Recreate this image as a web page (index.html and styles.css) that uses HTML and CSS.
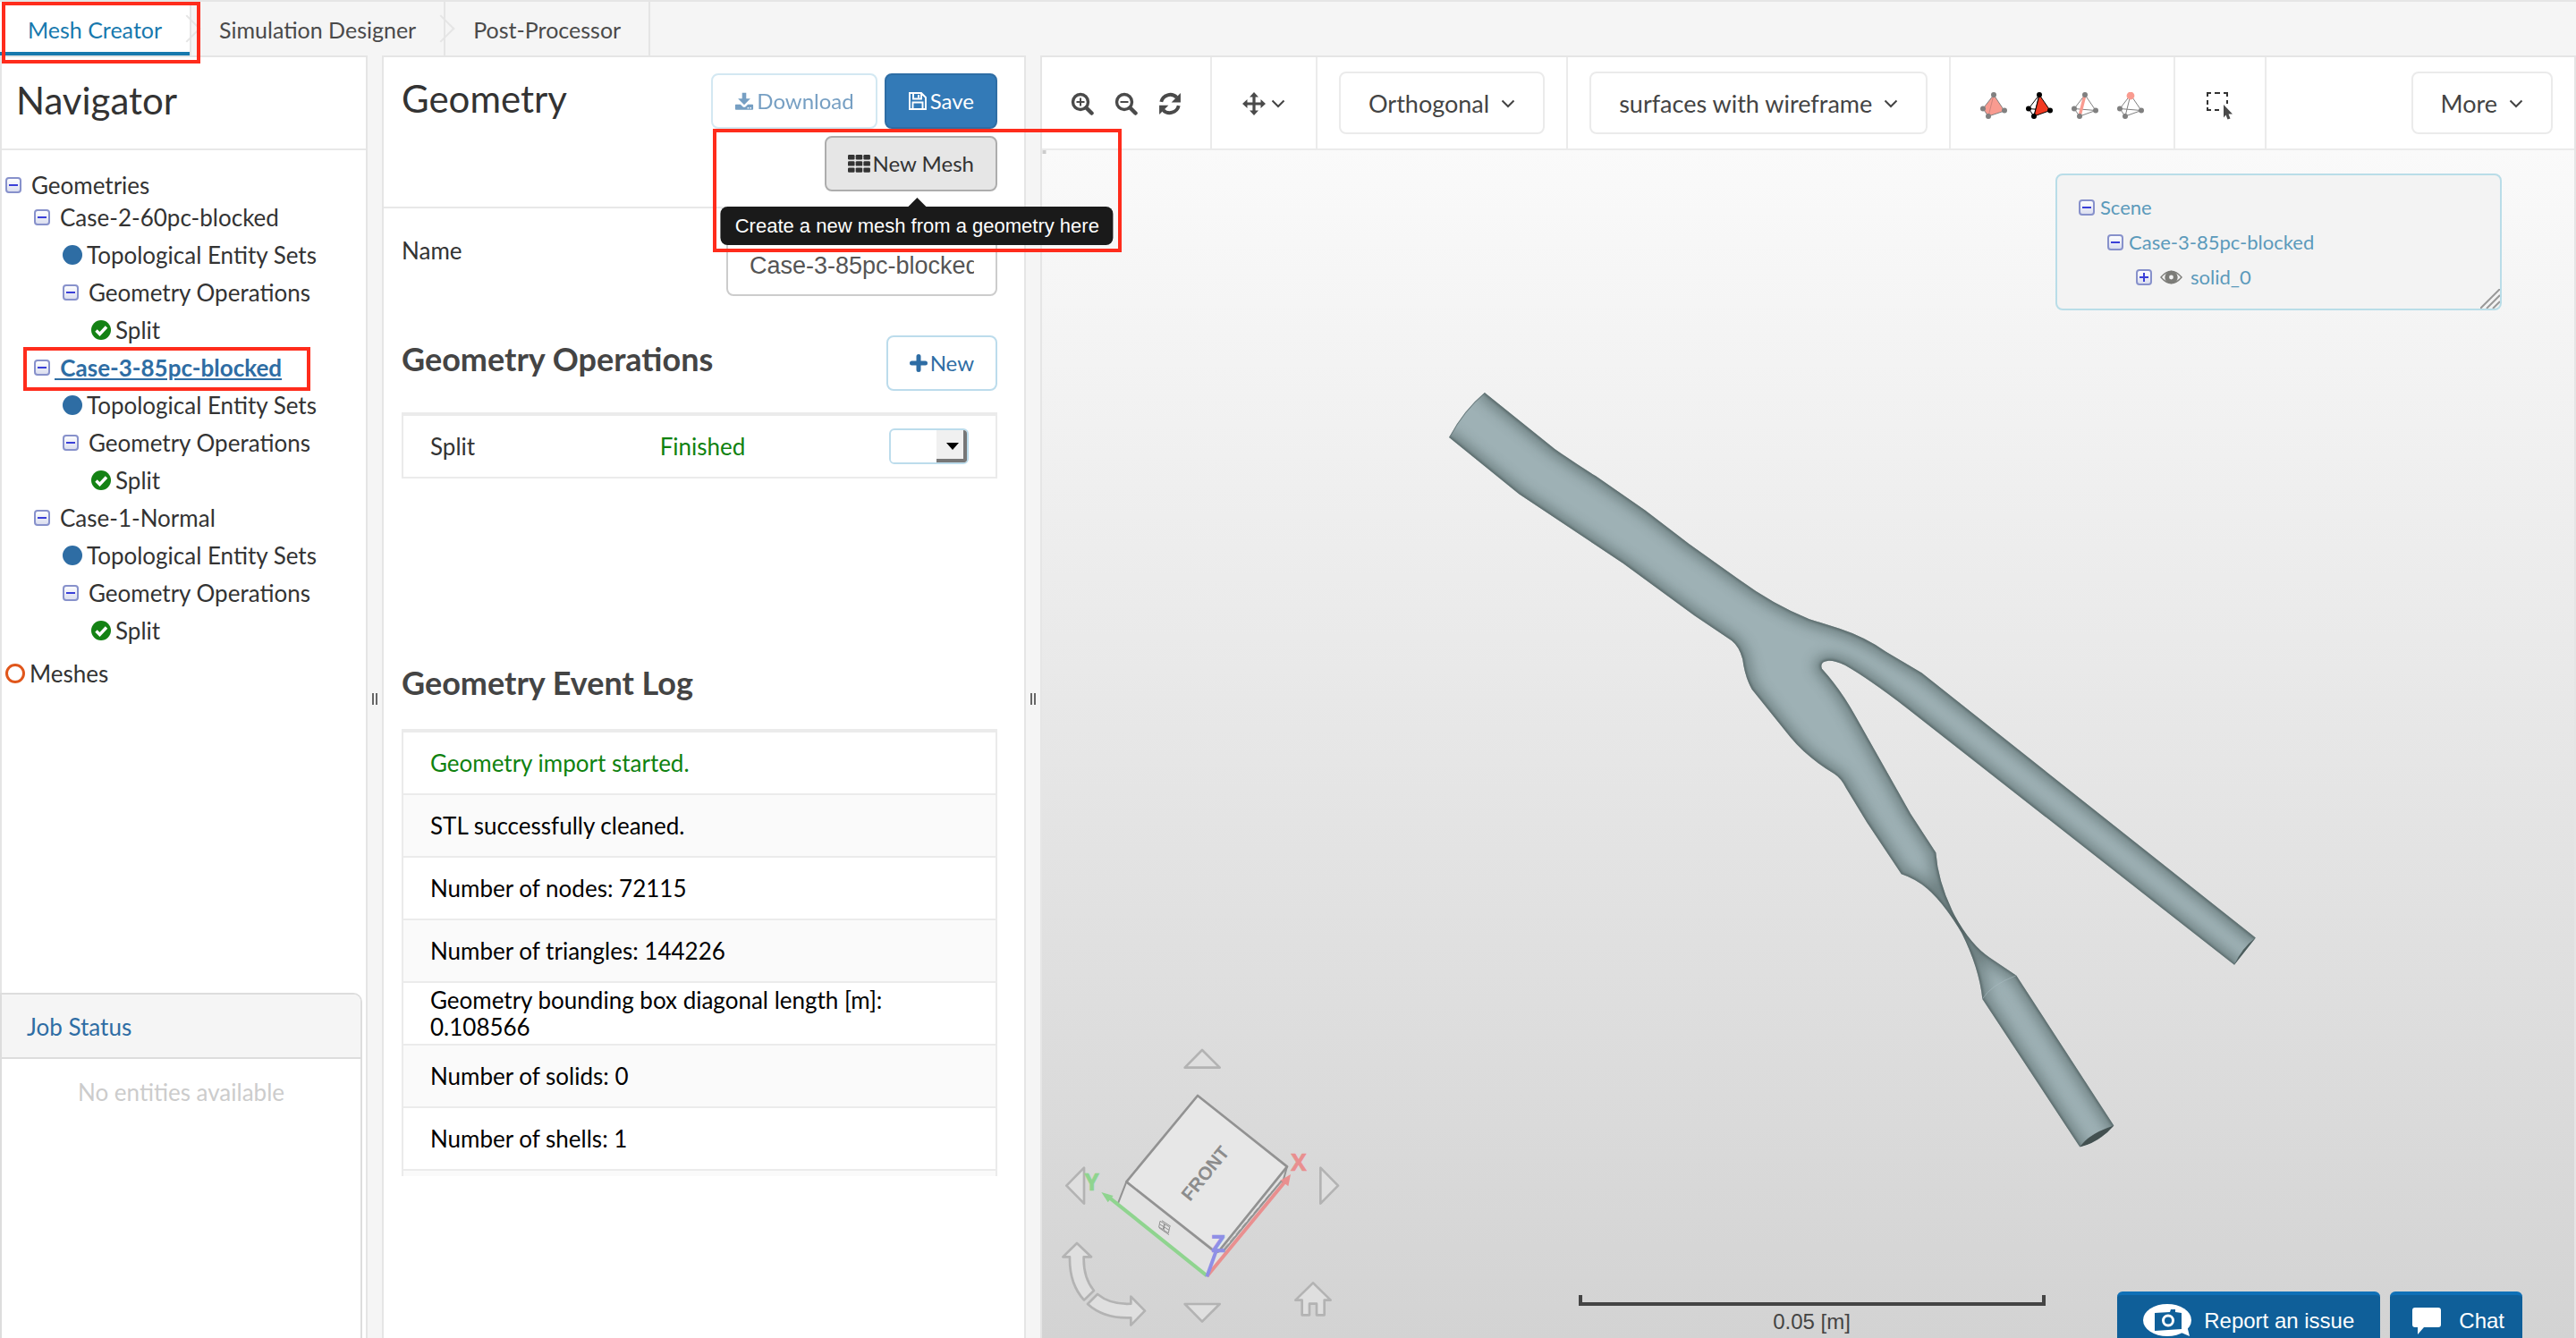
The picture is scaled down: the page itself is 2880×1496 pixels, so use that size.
FILE: index.html
```html
<!DOCTYPE html>
<html lang="en">
<head>
<meta charset="utf-8">
<title>Mesh Creator</title>
<link rel="stylesheet" href="styles.css">
</head>
<body>
<svg class="sprite" aria-hidden="true">
  <defs>
    <linearGradient id="box-fill" x1="0" y1="0" x2="0" y2="1"><stop offset="0" stop-color="#fff"/><stop offset="1" stop-color="#d9dcee"/></linearGradient>
  </defs>
  <symbol id="collapse" viewBox="0 0 18 18"><rect x="1" y="1" width="16" height="16" rx="3" fill="url(#box-fill)" stroke="#8791cb" stroke-width="2"/><path d="M4 9h10" stroke="#3a3fd8" stroke-width="2"/></symbol>
  <symbol id="expand" viewBox="0 0 18 18"><rect x="1" y="1" width="16" height="16" rx="3" fill="url(#box-fill)" stroke="#8791cb" stroke-width="2"/><path d="M4 9h10M9 4v10" stroke="#3a3fd8" stroke-width="2"/></symbol>
  <symbol id="dot" viewBox="0 0 22 22"><circle cx="11" cy="11" r="11" fill="#2e6da4"/></symbol>
  <symbol id="ring" viewBox="0 0 22 22"><circle cx="11" cy="11" r="9.5" fill="none" stroke="#e0561b" stroke-width="3"/></symbol>
  <symbol id="check" viewBox="0 0 22 22"><circle cx="11" cy="11" r="11" fill="#148214"/><path d="M5.500 11.500l4 4 7.500-8" fill="none" stroke="#fff" stroke-width="3.400"/></symbol>
  <symbol id="chevron" viewBox="0 0 16 10"><path d="M1.500 1.500L8 8l6.500-6.500" fill="none" stroke="#444" stroke-width="2"/></symbol>
  <symbol id="download" viewBox="0 0 24 24"><path fill="currentColor" d="M9.500 2h5v7h5L12 16.500 4.500 9h5zM2 16h5.500l3 3q1.500 1 3 0l3-3H22q1 0 1 1v4.500q0 1-1 1H2q-1 0-1-1V17q0-1 1-1z"/><path d="M16 20.500h1.600M19 20.500h1.600" stroke="#fff" stroke-width="1.600"/></symbol>
  <symbol id="floppy" viewBox="0 0 22 22"><path d="M2 2h13l5 5v13H2zM6 2v6.500h9V2M5.500 20v-7.500h11V20" fill="none" stroke="currentColor" stroke-width="1.900"/><path d="M11 4h2v3.500h-2z" fill="currentColor"/></symbol>
  <symbol id="grid" viewBox="0 0 25 20"><g fill="currentColor"><rect width="7.500" height="5.400" rx="1.200"/><rect x="8.700" width="7.500" height="5.400" rx="1.200"/><rect x="17.400" width="7.500" height="5.400" rx="1.200"/><rect y="7.200" width="7.500" height="5.400" rx="1.200"/><rect x="8.700" y="7.200" width="7.500" height="5.400" rx="1.200"/><rect x="17.400" y="7.200" width="7.500" height="5.400" rx="1.200"/><rect y="14.400" width="7.500" height="5.400" rx="1.200"/><rect x="8.700" y="14.400" width="7.500" height="5.400" rx="1.200"/><rect x="17.400" y="14.400" width="7.500" height="5.400" rx="1.200"/></g></symbol>
  <symbol id="plus" viewBox="0 0 20 20"><path d="M10 2.500v15M2.500 10h15" stroke="currentColor" stroke-width="5" stroke-linecap="round"/></symbol>
  <symbol id="zoom-in" viewBox="0 0 26 26"><g fill="none" stroke="#4a4a4a"><circle cx="11" cy="11" r="8.500" stroke-width="3.400"/><path d="M17.500 17.500l6 6" stroke-width="4.500" stroke-linecap="round"/><path d="M6.500 11h9M11 6.500v9" stroke-width="2"/></g></symbol>
  <symbol id="zoom-out" viewBox="0 0 26 26"><g fill="none" stroke="#4a4a4a"><circle cx="11" cy="11" r="8.500" stroke-width="3.400"/><path d="M17.500 17.500l6 6" stroke-width="4.500" stroke-linecap="round"/><path d="M6.500 11h9" stroke-width="2"/></g></symbol>
  <symbol id="refresh" viewBox="0 0 24 24"><path d="M3 10a9.500 9.500 0 0 1 16-4.500M21 14a9.500 9.500 0 0 1-16 4.500" fill="none" stroke="#4a4a4a" stroke-width="3.600"/><path d="M23 1v9.500h-9.500zM1 23v-9.500h9.500z" fill="#4a4a4a"/></symbol>
  <symbol id="move" viewBox="0 0 26 26"><path d="M13 4v18M4 13h18" stroke="#4a4a4a" stroke-width="3.200"/><path d="M13 0l5 5.500H8zM13 26l5-5.500H8zM0 13l5.500-5v10zM26 13l-5.500-5v10z" fill="#4a4a4a"/></symbol>
  <symbol id="marquee" viewBox="0 0 32 32"><path d="M2 6V2h4M10 2h6M20 2h4v4M24 10v4M2 10v5M2 18v3h4M10 21h5" fill="none" stroke="#333" stroke-width="2"/><path d="M20 15l10 10.500h-4.500l2 5-3 1-2-5-2.500 3z" fill="#4a4a4a"/></symbol>
  <symbol id="tetra-solid" viewBox="0 0 30 30"><path d="M15 3L3 18.500 9 27l18-6z" fill="#f99b90" stroke="#808080"/><path d="M15 3L9 27" stroke="#d0847c"/><g fill="#808080"><circle cx="15" cy="3" r="3"/><circle cx="3" cy="18.500" r="3"/><circle cx="9" cy="27" r="3"/><circle cx="27" cy="20.500" r="3"/></g></symbol>
  <symbol id="tetra-face" viewBox="0 0 30 30"><path d="M15 3L3 18.500 9 27 15 3M3 18.500l24 2" fill="none" stroke="#000"/><path d="M15 3L9 27l18-6.500z" fill="#f23a22" stroke="#000"/><g fill="#000"><circle cx="15" cy="3" r="3"/><circle cx="3" cy="18.500" r="3"/><circle cx="9" cy="27" r="3"/><circle cx="27" cy="20.500" r="3"/></g></symbol>
  <symbol id="tetra-edge" viewBox="0 0 30 30"><path d="M15 3L3 18.500 9 27l18-6.500zM3 18.500l24 2" fill="none" stroke="#808080"/><path d="M15 3L9 27" stroke="#f99b90" stroke-width="3.400"/><g fill="#808080"><circle cx="15" cy="3" r="3"/><circle cx="3" cy="18.500" r="3"/><circle cx="9" cy="27" r="3"/><circle cx="27" cy="20.500" r="3"/></g></symbol>
  <symbol id="tetra-vertex" viewBox="0 0 30 30"><path d="M15 3L3 18.500 9 27l18-6.500zM3 18.500l24 2M15 3L9 27" fill="none" stroke="#808080"/><circle cx="15" cy="4" r="4.400" fill="#f99b90"/><g fill="#808080"><circle cx="3" cy="18.500" r="3"/><circle cx="9" cy="27" r="3"/><circle cx="27" cy="20.500" r="3"/></g></symbol>
  <symbol id="eye" viewBox="0 0 26 16"><path d="M1 8q12-14 24 0-12 14-24 0z" fill="#f3f3f3" stroke="#7c7c78" stroke-width="1.400"/><circle cx="13" cy="8" r="5" fill="none" stroke="#7c7c78" stroke-width="5"/></symbol>
</svg>

<div class="app">
  <nav class="tabs">
    <a class="tab active marked" href="#mesh">Mesh Creator</a>
    <a class="tab" href="#simulation">Simulation Designer</a>
    <a class="tab" href="#post">Post-Processor</a>
  </nav>

  <main class="workspace">
    <section class="panel navigator">
      <header class="panel-head"><h1>Navigator</h1></header>
      <ul class="tree">
        <li class="root"><svg class="box"><use href="#collapse"/></svg><span>Geometries</span></li>
        <li class="level-1"><svg class="box"><use href="#collapse"/></svg><span>Case-2-60pc-blocked</span></li>
        <li class="level-2"><svg class="bullet"><use href="#dot"/></svg><span>Topological Entity Sets</span></li>
        <li class="level-2"><svg class="box"><use href="#collapse"/></svg><span>Geometry Operations</span></li>
        <li class="level-3"><svg class="bullet"><use href="#check"/></svg><span>Split</span></li>
        <li class="level-1 marked"><svg class="box"><use href="#collapse"/></svg><a class="current" href="#case-3">&nbsp;Case-3-85pc-blocked</a></li>
        <li class="level-2"><svg class="bullet"><use href="#dot"/></svg><span>Topological Entity Sets</span></li>
        <li class="level-2"><svg class="box"><use href="#collapse"/></svg><span>Geometry Operations</span></li>
        <li class="level-3"><svg class="bullet"><use href="#check"/></svg><span>Split</span></li>
        <li class="level-1"><svg class="box"><use href="#collapse"/></svg><span>Case-1-Normal</span></li>
        <li class="level-2"><svg class="bullet"><use href="#dot"/></svg><span>Topological Entity Sets</span></li>
        <li class="level-2"><svg class="box"><use href="#collapse"/></svg><span>Geometry Operations</span></li>
        <li class="level-3"><svg class="bullet"><use href="#check"/></svg><span>Split</span></li>
        <li class="meshes"><svg class="bullet"><use href="#ring"/></svg><span>Meshes</span></li>
      </ul>
      <section class="jobs">
        <h2><a href="#jobs">Job Status</a></h2>
        <p>No entities available</p>
      </section>
    </section>

    <div class="splitter"><i></i></div>

    <section class="panel geometry">
      <header class="geometry-head">
        <h1>Geometry</h1>
        <div class="actions">
          <button class="btn outline" type="button" disabled><svg class="glyph"><use href="#download"/></svg>Download</button>
          <button class="btn primary" type="button"><svg class="glyph"><use href="#floppy"/></svg>Save</button>
          <div class="marked new-mesh">
            <button class="btn neutral" type="button" aria-describedby="mesh-tip"><svg class="glyph wide"><use href="#grid"/></svg>New Mesh</button>
            <div class="tooltip" id="mesh-tip" role="tooltip">Create a new mesh from a geometry here</div>
          </div>
        </div>
      </header>
      <div class="geometry-body">
        <div class="field"><label for="name">Name</label><input id="name" type="text" value="Case-3-85pc-blocked"></div>
        <section class="operations">
          <div class="section-head"><h2>Geometry Operations</h2><button class="btn outline" type="button"><svg class="glyph small"><use href="#plus"/></svg>New</button></div>
          <table>
            <tr><td>Split</td><td class="ok">Finished</td><td><span class="picker"><select aria-label="Split actions"><option></option></select></span></td></tr>
          </table>
        </section>
        <section>
          <h2>Geometry Event Log</h2>
          <ul class="log">
            <li class="ok">Geometry import started.</li>
            <li>STL successfully cleaned.</li>
            <li>Number of nodes: 72115</li>
            <li>Number of triangles: 144226</li>
            <li>Geometry bounding box diagonal length [m]: 0.108566</li>
            <li>Number of solids: 0</li>
            <li>Number of shells: 1</li>
            <li></li>
          </ul>
        </section>
      </div>
    </section>

    <div class="splitter"><i></i></div>

    <section class="panel viewer">
      <div class="toolbar">
        <div class="group zoom">
          <button class="tool" type="button" aria-label="Zoom in"><svg class="icon"><use href="#zoom-in"/></svg></button>
          <button class="tool" type="button" aria-label="Zoom out"><svg class="icon"><use href="#zoom-out"/></svg></button>
          <button class="tool" type="button" aria-label="Reset view"><svg class="icon"><use href="#refresh"/></svg></button>
        </div>
        <div class="group pan">
          <button class="tool" type="button" aria-label="Move"><svg class="icon"><use href="#move"/></svg><svg class="chev"><use href="#chevron"/></svg></button>
        </div>
        <div class="group"><button class="menu" type="button">Orthogonal<svg class="chev"><use href="#chevron"/></svg></button></div>
        <div class="group"><button class="menu" type="button">surfaces with wireframe<svg class="chev"><use href="#chevron"/></svg></button></div>
        <div class="group pick">
          <button class="tool" type="button" aria-label="Pick volumes"><svg class="tetra"><use href="#tetra-solid"/></svg></button>
          <button class="tool" type="button" aria-label="Pick faces"><svg class="tetra"><use href="#tetra-face"/></svg></button>
          <button class="tool" type="button" aria-label="Pick edges"><svg class="tetra"><use href="#tetra-edge"/></svg></button>
          <button class="tool" type="button" aria-label="Pick vertices"><svg class="tetra"><use href="#tetra-vertex"/></svg></button>
        </div>
        <div class="group box-select"><button class="tool" type="button" aria-label="Box selection"><svg class="marquee"><use href="#marquee"/></svg></button></div>
        <div class="more"><button class="menu" type="button">More<svg class="chev"><use href="#chevron"/></svg></button></div>
      </div>

      <div class="canvas">
        <svg class="scene" viewBox="0 0 1712 1328">
          <defs>
            <clipPath id="body"><path d="M97 34L225 146Q260 173 300 200L390 268 470 335 560 405Q625 457 690 485L745 504Q790 520 830 550L895 592 1505 1120 1466 1174 870 664Q800 605 755 577 735 567 725 568 708 570 713 584 748 626 775 680L875 873 921 950Q925 1010 955 1075 985 1135 1020 1160L1068 1195 1246 1494Q1220 1527 1184 1537L1006 1242Q1000 1180 968 1110 935 1050 905 1022 885 1003 858 993L795 890 757 822Q748 802 735 793 685 760 655 720L585 625Q572 600 568 565 562 540 548 528L480 478 350 374 160 236 32 123Q59 68 97 34z"/></clipPath>
            <filter id="soft" x="-10%" y="-10%" width="120%" height="120%"><feGaussianBlur stdDeviation="12"/></filter>
            <filter id="fine" x="-10%" y="-10%" width="120%" height="120%"><feGaussianBlur stdDeviation="3"/></filter>
            <g id="edges">
              <path d="M90 28L225 146Q260 173 300 200L390 268 470 335 560 405Q625 457 690 485L745 504Q790 520 830 550L895 592 1515 1129"/>
              <path d="M1476 1183L870 664Q800 605 755 577 735 567 725 568 708 570 713 584 748 626 775 680L875 873 921 950Q925 1010 955 1075 985 1135 1020 1160L1068 1195 1256 1511"/>
              <path d="M1194 1554L1006 1242Q1000 1180 968 1110 935 1050 905 1022 885 1003 858 993L795 890 757 822Q748 802 735 793 685 760 655 720L585 625Q572 600 568 565 562 540 548 528L480 478 350 374 160 236 22 114"/>
            </g>
          </defs>
          <path d="M0 0h4v4H0z" fill="#ccc"/>
          <g transform="translate(435 252) scale(.6122 .5612)">
            <g clip-path="url(#body)">
              <path d="M0 0h1568v1568H0z" fill="#9eb1b5"/>
              <use href="#edges" fill="none" stroke="#4f6060" stroke-width="24" opacity=".62" filter="url(#soft)"/>
              <use href="#edges" fill="none" stroke="#3e4d4d" stroke-width="6" opacity=".6" filter="url(#fine)"/>
              <path d="M1505 1120Q1480 1140 1466 1174L1480 1174z" fill="#4c5c5c"/>
              <path d="M1246 1494Q1200 1510 1184 1537 1230 1525 1246 1494z" fill="#435050"/>
              <path d="M1068 1195Q1020 1215 1006 1242" fill="none" stroke="#a9bdc1" stroke-width="1"/>
              <path d="M97 34Q59 68 32 123" fill="none" stroke="#6d7d7f" stroke-width="3"/>
            </g>
          </g>
        </svg>

        <div class="scene-tree">
          <div class="node"><svg class="box"><use href="#collapse"/></svg><span>Scene</span></div>
          <div class="node child"><svg class="box"><use href="#collapse"/></svg><span>Case-3-85pc-blocked</span></div>
          <div class="node leaf"><svg class="box"><use href="#expand"/></svg><svg class="eye"><use href="#eye"/></svg><span>solid_0</span></div>
          <svg class="grip" viewBox="0 0 22 22"><path d="M0 22L22 0M7 22L22 7M14 22l8-8" stroke="#999" stroke-width="2"/></svg>
        </div>

        <svg class="cube" viewBox="18 0 1122 1038">
          <g fill="#dfdfdf" stroke="#b3b3b3" stroke-width="8" stroke-linejoin="round">
            <path d="M555 72l59 59H497zM555 983l59-59H497zM100 527l59-60v120zM1011 527l-59-60v120z"/>
            <path d="M135 720l48 46h-25q-2 70 34 113l-33 32q-50-55-48-145H88zM204 891q44 36 112 32v-24l47 48-47 48v-25q-90 4-145-46zM927 853l59 58h-21v50h-26v-38h-24v38h-25v-50h-22z"/>
          </g>
          <path d="M301 514L273 586 570 831 601 751zM601 751l-31 80L815 525l25-62z" fill="#e2e2e2"/>
          <path d="M540 225L840 463 610 750 301 514z" fill="#e7e7e7"/>
          <path d="M301 514L540 225 840 463 610 748 601 751z" fill="none" stroke="#929292" stroke-width="8" stroke-linejoin="round"/>
          <path d="M301 514L273 586M840 463l-18 65M628 745L822 510" fill="none" stroke="#929292" stroke-width="6"/>
          <path d="M628 738L790 545" stroke="#888" stroke-width="2" stroke-dasharray="22 9"/>
          <text class="face" transform="translate(582 499) rotate(-51)">FRONT</text>
          <path d="M420 644l30 20M410 668l34 24M414 646l-4 20 14 8 4-20zM430 656l-4 20 16 10 4-20zM412 656l32 20" fill="none" stroke="#909090" stroke-width="3"/>
          <path d="M571 831L836 510" stroke="#e98f8f" stroke-width="12"/><path d="M852 489l-8 40-26-20z" fill="#e98f8f"/>
          <path d="M571 829L245 568" stroke="#8fd48f" stroke-width="12"/><path d="M217 549l40 12-18 22z" fill="#8fd48f"/>
          <path d="M571 832l31-86" stroke="#8f8fe6" stroke-width="12"/>
          <text class="axis x" x="879" y="477">X</text>
          <text class="axis y" x="185" y="543">Y</text>
          <text class="axis z" x="609" y="750">Z</text>
        </svg>

        <div class="scale"><i></i><span>0.05 [m]</span></div>

        <div class="support">
          <button type="button"><svg class="report" viewBox="0 0 54 38"><ellipse cx="27" cy="18" rx="27" ry="18" fill="#fff"/><path d="M38 30l14 6-3-12z" fill="#fff"/><path d="M13 10l17-1 1-3 5 0v3l7 1v18l-30 2z" fill="#0f5f99"/><circle cx="28" cy="18.500" r="5.500" fill="none" stroke="#fff" stroke-width="3"/></svg>Report an issue</button>
          <button class="chat" type="button"><svg class="bubble" viewBox="0 0 32 30"><path d="M3 0h26q3 0 3 3v16q0 3-3 3H13l-7 8V22H3q-3 0-3-3V3q0-3 3-3z" fill="#fff"/></svg>Chat</button>
        </div>
      </div>
    </section>
  </main>
</div>
</body>
</html>
```
FILE: styles.css
```css
* { box-sizing: border-box; }

body {
  margin: 0;
  font: 26px/30px Lato, sans-serif;
  color: #333;
  background: #f5f5f5;
}

h1, h2, p, ul { margin: 0; padding: 0; }
ul { list-style: none; }
h1 { font-size: 42px; line-height: 56px; font-weight: 400; }
a { color: inherit; text-decoration: none; }
button { font: inherit; color: inherit; cursor: pointer; margin: 0; }
svg { flex: none; display: block; }

.sprite { position: absolute; width: 0; height: 0; }

.app { display: flex; flex-direction: column; height: 100vh; min-height: 1320px; overflow: hidden; }

/* module tabs */
.tabs { display: flex; height: 62px; flex: none; border-top: 2px solid #e5e5e5; color: #4a4a4a; font-size: 25px; }
.tab {
  position: relative;
  display: flex;
  align-items: center;
  padding: 2px 31px 0;
  border-right: 2px solid #e5e5e5;
}
.tab:not(:last-child)::before {
  content: "";
  position: absolute;
  z-index: 1;
  right: -8px;
  top: 19px;
  width: 20px;
  height: 20px;
  border: solid #e5e5e5;
  border-width: 2px 2px 0 0;
  transform: rotate(45deg);
}
.tab.active { background: #fff; color: #1779ae; box-shadow: inset 0 -4px #1779ae; }

/* highlighted spots */
.marked { position: relative; }
.marked::after {
  content: "";
  position: absolute;
  z-index: 5;
  border: 4px solid #ff2c1c;
  pointer-events: none;
}
.tab.marked::after { left: 2px; top: 0; right: -12px; bottom: -9px; }
.tree .marked::after { left: 24px; right: 62px; top: -2px; bottom: -5px; }
.new-mesh::after { left: -125px; right: -139px; top: -8px; bottom: -68px; }

/* workspace */
.workspace { display: flex; flex: 1; min-height: 0; }
.panel { background: #fff; border: solid #e5e5e5; border-width: 2px 2px 0; }
.splitter { width: 16px; flex: none; display: flex; align-items: center; justify-content: center; padding-top: 4px; }
.splitter i { width: 6px; height: 13px; border: solid #666; border-width: 0 2px; }

/* navigator */
.navigator { width: 411px; flex: none; display: flex; flex-direction: column; }
.panel-head { height: 104px; padding: 20px 16px; border-bottom: 2px solid #e8e8e8; }
.tree { padding-top: 24px; }
.tree li { display: flex; align-items: center; height: 42px; }
.tree .root { height: 30px; padding-left: 4px; }
.tree .level-1 { padding-left: 36px; }
.tree .level-2 { padding-left: 68px; }
.tree .level-3 { padding-left: 100px; }
.tree .meshes { margin-top: 6px; padding-left: 4px; }
.box { width: 18px; height: 18px; }
.bullet { width: 22px; height: 22px; }
.tree .box + span { margin-left: 11px; }
.tree .bullet + span { margin-left: 5px; }
.tree .current { margin-left: 5px; color: #2e6da4; font-weight: 700; text-decoration: underline; }

.jobs {
  flex: 1;
  margin: auto 4px 0 -2px;
  max-height: 386px;
  border: 2px solid #ddd;
  border-bottom: 0;
  border-radius: 0 10px 0 0;
}
.jobs h2 {
  height: 72px;
  padding-left: 28px;
  font-size: 26px;
  line-height: 72px;
  font-weight: 400;
  color: #2e6da4;
  background: #f5f5f5;
  border-bottom: 2px solid #ddd;
  border-radius: 0 8px 0 0;
}
.jobs p { padding-top: 22px; text-align: center; color: #ccc; }

/* geometry */
.geometry { width: 720px; flex: none; }
.geometry-head {
  display: flex;
  justify-content: space-between;
  padding: 18px 30px 17px 20px;
  border-bottom: 2px solid #e8e8e8;
}
.actions { display: flex; flex-wrap: wrap; justify-content: flex-end; gap: 8px; max-width: 340px; }
.btn {
  display: flex;
  align-items: center;
  gap: 3px;
  height: 62px;
  padding: 0 24px;
  font-size: 24px;
  background: #fff;
  border: 2px solid;
  border-radius: 8px;
}
.glyph { width: 22px; height: 22px; }
.glyph.wide { width: 25px; height: 20px; }
.glyph.small { width: 20px; height: 20px; }
.outline { color: #2e6da4; border-color: #bcdcec; }
.outline:disabled { opacity: .65; }
.primary { color: #fff; background: #337ab7; border-color: #2e6da4; }
.neutral { color: #333; background: #e6e6e6; border-color: #adadad; }

.tooltip {
  position: absolute;
  z-index: 4;
  top: 79px;
  left: 50%;
  margin-left: 7px;
  transform: translateX(-50%);
  padding: 6px 16px;
  font: 22px/31px "Liberation Sans", Arial, sans-serif;
  color: #fff;
  white-space: nowrap;
  background: #1a1a1a;
  border-radius: 8px;
}
.tooltip::before {
  content: "";
  position: absolute;
  left: 50%;
  top: -10px;
  margin-left: -10px;
  border: solid transparent;
  border-width: 0 10px 10px;
  border-bottom-color: #1a1a1a;
}

.geometry-body { padding: 30px 30px 0 20px; }
.field { display: flex; justify-content: space-between; align-items: flex-start; }
.field label { line-height: 34px; }
.field input {
  width: 303px;
  height: 68px;
  padding: 0 24px;
  font: 27px "Liberation Sans", Arial, sans-serif;
  color: #555;
  border: 2px solid #ccc;
  border-radius: 8px;
}
h2 { font-size: 36px; line-height: 52px; color: #444; }
.operations { margin-top: 44px; min-height: 362px; }
.section-head { display: flex; justify-content: space-between; margin-bottom: 24px; }
table { width: 100%; border-collapse: separate; border-spacing: 0; border: 2px solid #ebebeb; border-top-width: 4px; table-layout: fixed; }
td { height: 68px; padding: 0 0 0 30px; }
td + td { padding-left: 66px; }
td:last-child { padding-left: 102px; }
.ok { color: #108210; }
.picker {
  position: relative;
  display: block;
  width: 89px;
  height: 40px;
  border: 2px solid #bcdcec;
  border-radius: 6px;
  overflow: hidden;
}
.picker select { width: 100%; height: 100%; appearance: none; border: 0; background: #fff; }
.picker::before {
  content: "";
  position: absolute;
  right: 0;
  top: 0;
  bottom: 0;
  width: 30px;
  background: #f0f0f0;
  border: solid #777;
  border-width: 0 4px 4px 0;
  pointer-events: none;
}
.picker::after {
  content: "";
  position: absolute;
  right: 9px;
  top: 14px;
  border: solid transparent;
  border-width: 8px 7px 0;
  border-top-color: #000;
  pointer-events: none;
}
.log { height: 500px; margin-top: 26px; overflow: hidden; color: #000; border: solid #ebebeb; border-width: 4px 2px 0; }
.log li { display: flex; align-items: center; height: 70px; padding: 0 30px; border-bottom: 2px solid #ebebeb; }
.log li:nth-child(even) { background: #fafafa; }
.log .ok { color: #108210; }

/* viewer */
.viewer { flex: 1; min-width: 0; display: flex; flex-direction: column; }
.toolbar { display: flex; height: 104px; flex: none; border-bottom: 2px solid #ebebeb; color: #444; }
.group { display: flex; align-items: center; padding: 0 24px; border-right: 2px solid #ebebeb; }
.tool { display: flex; align-items: center; padding: 2px 0 0; border: 0; background: none; }
.zoom { gap: 23px; padding: 0 32px; }
.pan { padding: 0 34px; }
.pan .tool { gap: 6px; }
.pick { gap: 21px; padding: 4px 33px 0; }
.box-select { padding: 4px 34px 0; }
.icon { width: 26px; height: 26px; }
.tetra { width: 30px; height: 30px; }
.marquee { width: 32px; height: 32px; }
.chev { width: 16px; height: 10px; }
.menu {
  display: flex;
  align-items: center;
  gap: 13px;
  height: 70px;
  padding: 2px 31px 0;
  font-size: 27px;
  background: #fff;
  border: 2px solid #ebebeb;
  border-radius: 8px;
}
.more { display: flex; align-items: center; margin-left: auto; padding-right: 24px; }

.canvas { position: relative; flex: 1; min-height: 0; overflow: hidden; background: linear-gradient(#fafafa, #d3d3d3); }
.scene { position: absolute; width: 100%; height: 100%; }

.scene-tree {
  position: absolute;
  top: 26px;
  right: 81px;
  width: 499px;
  height: 153px;
  padding: 16px 24px;
  font-size: 22px;
  color: #5b9abb;
  background: #f3f3f3;
  border: 2px solid #b9dde8;
  border-radius: 8px;
}
.node { display: flex; align-items: center; gap: 6px; height: 39px; }
.node.child { padding-left: 32px; }
.node.leaf { padding-left: 64px; gap: 9px; }
.eye { width: 25px; height: 16px; }
.grip { position: absolute; right: 0; bottom: 0; width: 22px; height: 22px; }

.cube { position: absolute; left: 0; bottom: 0; width: 374px; height: 346px; }
.face { font: 700 62px "Liberation Sans", Arial, sans-serif; fill: #8c8c8c; text-anchor: middle; }
.axis { font: 700 78px "Open Sans", Arial, sans-serif; text-anchor: middle; stroke-width: 2px; }
.axis.x { fill: #e98f8f; stroke: #e98f8f; }
.axis.y { fill: #8fd48f; stroke: #8fd48f; }
.axis.z { fill: #8f8fe6; stroke: #8f8fe6; }

.scale {
  position: absolute;
  left: 35%;
  bottom: 0;
  width: 522px;
  display: flex;
  flex-direction: column;
  font: 24px/36px "Liberation Sans", Arial, sans-serif;
  text-align: center;
  color: #444;
}
.scale i { height: 12px; border: 4px solid #444; border-top: 0; }

.support { position: absolute; right: 58px; bottom: 0; display: flex; gap: 11px; }
.support button {
  display: flex;
  align-items: center;
  gap: 14px;
  height: 52px;
  padding: 10px 29px 0;
  font: 24px "Liberation Sans", Arial, sans-serif;
  color: #fff;
  background: #0f5f99;
  border: 0;
  border-top: 4px solid #0f70b7;
  border-radius: 6px 6px 0 0;
}
.support .chat { gap: 20px; padding: 10px 20px 0 25px; }
.report { width: 54px; height: 38px; }
.bubble { width: 32px; height: 30px; }
```
